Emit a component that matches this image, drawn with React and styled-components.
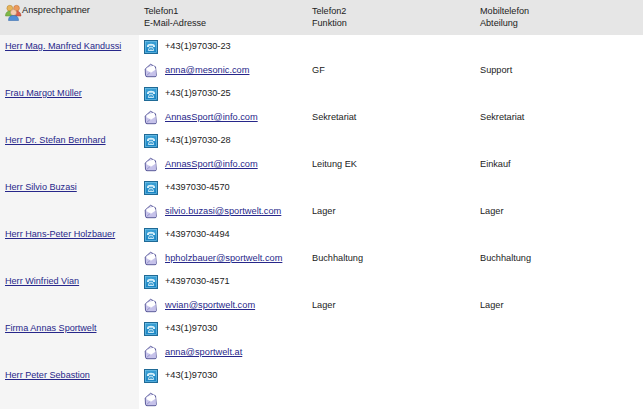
import React from "react";
import styled, { createGlobalStyle } from "styled-components";

const Global = createGlobalStyle`
  html, body { margin: 0; padding: 0; background: #fff; }
  body { font-family: "Liberation Sans", Arial, sans-serif; font-size: 9.2px; color: #222; overflow: hidden; }
`;
const Page = styled.div`width: 643px; height: 409px; overflow: hidden; display: flex; flex-direction: column;`;
const HeaderBar = styled.div`
  display: grid; grid-template-columns: 139px 168px 168px 168px; height: 35px; background: #e6e6e6; flex: none;
`;
const HeaderCell = styled.div`
  display: flex; flex-direction: column; padding: 5px 0 0 5px; line-height: 12px; color: #222; font-size: 9.1px;
`;
const PersonHead = styled.div`
  display: flex; align-items: flex-start; gap: 0; padding: 4px 0 0 5px; line-height: 13px; color: #222; font-size: 9.2px;
`;
const Body = styled.div`display: flex; flex: 1; min-height: 0;`;
const Contact = styled.section`
  display: grid; grid-template-columns: 139px 168px 168px 168px; grid-auto-rows: 23.5px;
`;
const List = styled.div`display: flex; flex-direction: column; width: 100%; background: linear-gradient(to right, #f5f5f5 139px, #fff 139px);`;
const NameCell = styled.div`grid-row: span 2; padding: 5px 0 0 5px; line-height: 12px;`;
const NameLink = styled.a`color: #27278a; text-decoration: underline; font-size: 9.1px;`;
const MailLink = styled.a`color: #27278a; text-decoration: underline; font-size: 9.25px;`;
const IconCell = styled.div`display: flex; align-items: center; gap: 7px; padding-left: 5px; line-height: 12px;`;
const Cell = styled.div`display: flex; align-items: center; padding-left: 5px; line-height: 12px; font-size: 9.2px;`;
const Phone = styled.span`font-size: 9.2px; padding-bottom: 2px;`;

const PeopleIcon = () => (
  <svg width="17" height="17" viewBox="0 0 17 17" style={{ flex: "none" }}>
    <circle cx="4.800" cy="4.200" r="2.900" fill="#e6b45a" stroke="#b08030" strokeWidth=".5" />
    <path d="M.5 12c0-3.500 2-5 4.500-5s4 1.500 4 5z" fill="#7fb848" stroke="#5a8c30" strokeWidth=".5" />
    <circle cx="11.500" cy="4.200" r="2.900" fill="#ec9a5c" stroke="#b86a30" strokeWidth=".5" />
    <path d="M8 12c0-3.500 1.500-5 3.500-5s4.500 1.500 4.500 5z" fill="#d8604c" stroke="#a84030" strokeWidth=".5" />
    <circle cx="8.500" cy="8.500" r="3" fill="#f4cdb0" stroke="#b98a6a" strokeWidth=".5" />
    <path d="M3.500 16.500c0-3.700 2-5 5-5s5 1.300 5 5z" fill="#4f8ed8" stroke="#2c62a4" strokeWidth=".5" />
  </svg>
);
const PhoneIcon = () => (
  <svg width="14" height="14" viewBox="0 0 14 14" style={{ flex: "none" }}>
    <defs>
      <linearGradient id="pg" x1="0" y1="0" x2="0" y2="1">
        <stop offset="0" stopColor="#3fa4d8" />
        <stop offset="1" stopColor="#1480c0" />
      </linearGradient>
    </defs>
    <rect x=".5" y=".5" width="13" height="13" fill="url(#pg)" stroke="#1f6a96" />
    <rect x="1.500" y="1.500" width="11" height="11" fill="none" stroke="#7cc6ea" strokeWidth=".6" />
    <path d="M3 6c0-1.500 2-2.200 4-2.200S11 4.500 11 6v1H9V5.800H5V7H3z" fill="#d8f0fa" />
    <path d="M4.300 10.500 5.500 7.300h3l1.200 3.200z" fill="none" stroke="#d8f0fa" strokeWidth=".9" />
    <circle cx="7" cy="9.100" r=".7" fill="#d8f0fa" />
  </svg>
);
const MailIcon = () => (
  <svg width="14" height="15" viewBox="0 0 14 15" style={{ flex: "none" }}>
    <path d="M1.200 6 6.500 1.300l5 2.500.8 8.700a1.200 1.200 0 0 1-1.200 1.200H3A1.500 1.500 0 0 1 1.500 12.500z" fill="#d8d6f2" stroke="#4a4a90" strokeWidth=".9" />
    <path d="M2.800 7.200 2.600 5 9.800 2.600l2 3.800L7 9.500z" fill="#fff" />
    <path d="M2 7.200 6.800 10.200l5-3.400V13H2.400z" fill="#c6c2ea" />
    <path d="M2.300 12.800 6.200 9.400" stroke="#7a7ab8" strokeWidth=".6" fill="none" />
  </svg>
);

const contacts = [
  ["Herr Mag. Manfred Kandussi", "+43(1)97030-23", "anna@mesonic.com", "GF", "Support"],
  ["Frau Margot Müller", "+43(1)97030-25", "AnnasSport@info.com", "Sekretariat", "Sekretariat"],
  ["Herr Dr. Stefan Bernhard", "+43(1)97030-28", "AnnasSport@info.com", "Leitung EK", "Einkauf"],
  ["Herr Silvio Buzasi", "+4397030-4570", "silvio.buzasi@sportwelt.com", "Lager", "Lager"],
  ["Herr Hans-Peter Holzbauer", "+4397030-4494", "hpholzbauer@sportwelt.com", "Buchhaltung", "Buchhaltung"],
  ["Herr Winfried Vian", "+4397030-4571", "wvian@sportwelt.com", "Lager", "Lager"],
  ["Firma Annas Sportwelt", "+43(1)97030", "anna@sportwelt.at", "", ""],
  ["Herr Peter Sebastion", "+43(1)97030", "", "", ""],
];

export default function App() {
  return (
    <Page>
      <Global />
      <HeaderBar>
        <PersonHead><PeopleIcon /><span>Ansprechpartner</span></PersonHead>
        <HeaderCell><span>Telefon1</span><span>E-Mail-Adresse</span></HeaderCell>
        <HeaderCell><span>Telefon2</span><span>Funktion</span></HeaderCell>
        <HeaderCell><span>Mobiltelefon</span><span>Abteilung</span></HeaderCell>
      </HeaderBar>
      <Body>
        <List>
          {contacts.map(([name, phone, mail, role, dept]) => (
            <Contact key={name}>
              <NameCell><NameLink href="#">{name}</NameLink></NameCell>
              <IconCell><PhoneIcon /><Phone>{phone}</Phone></IconCell>
              <Cell />
              <Cell />
              <IconCell><MailIcon />{mail && <MailLink href="#">{mail}</MailLink>}</IconCell>
              <Cell>{role}</Cell>
              <Cell>{dept}</Cell>
            </Contact>
          ))}
        </List>
      </Body>
    </Page>
  );
}
